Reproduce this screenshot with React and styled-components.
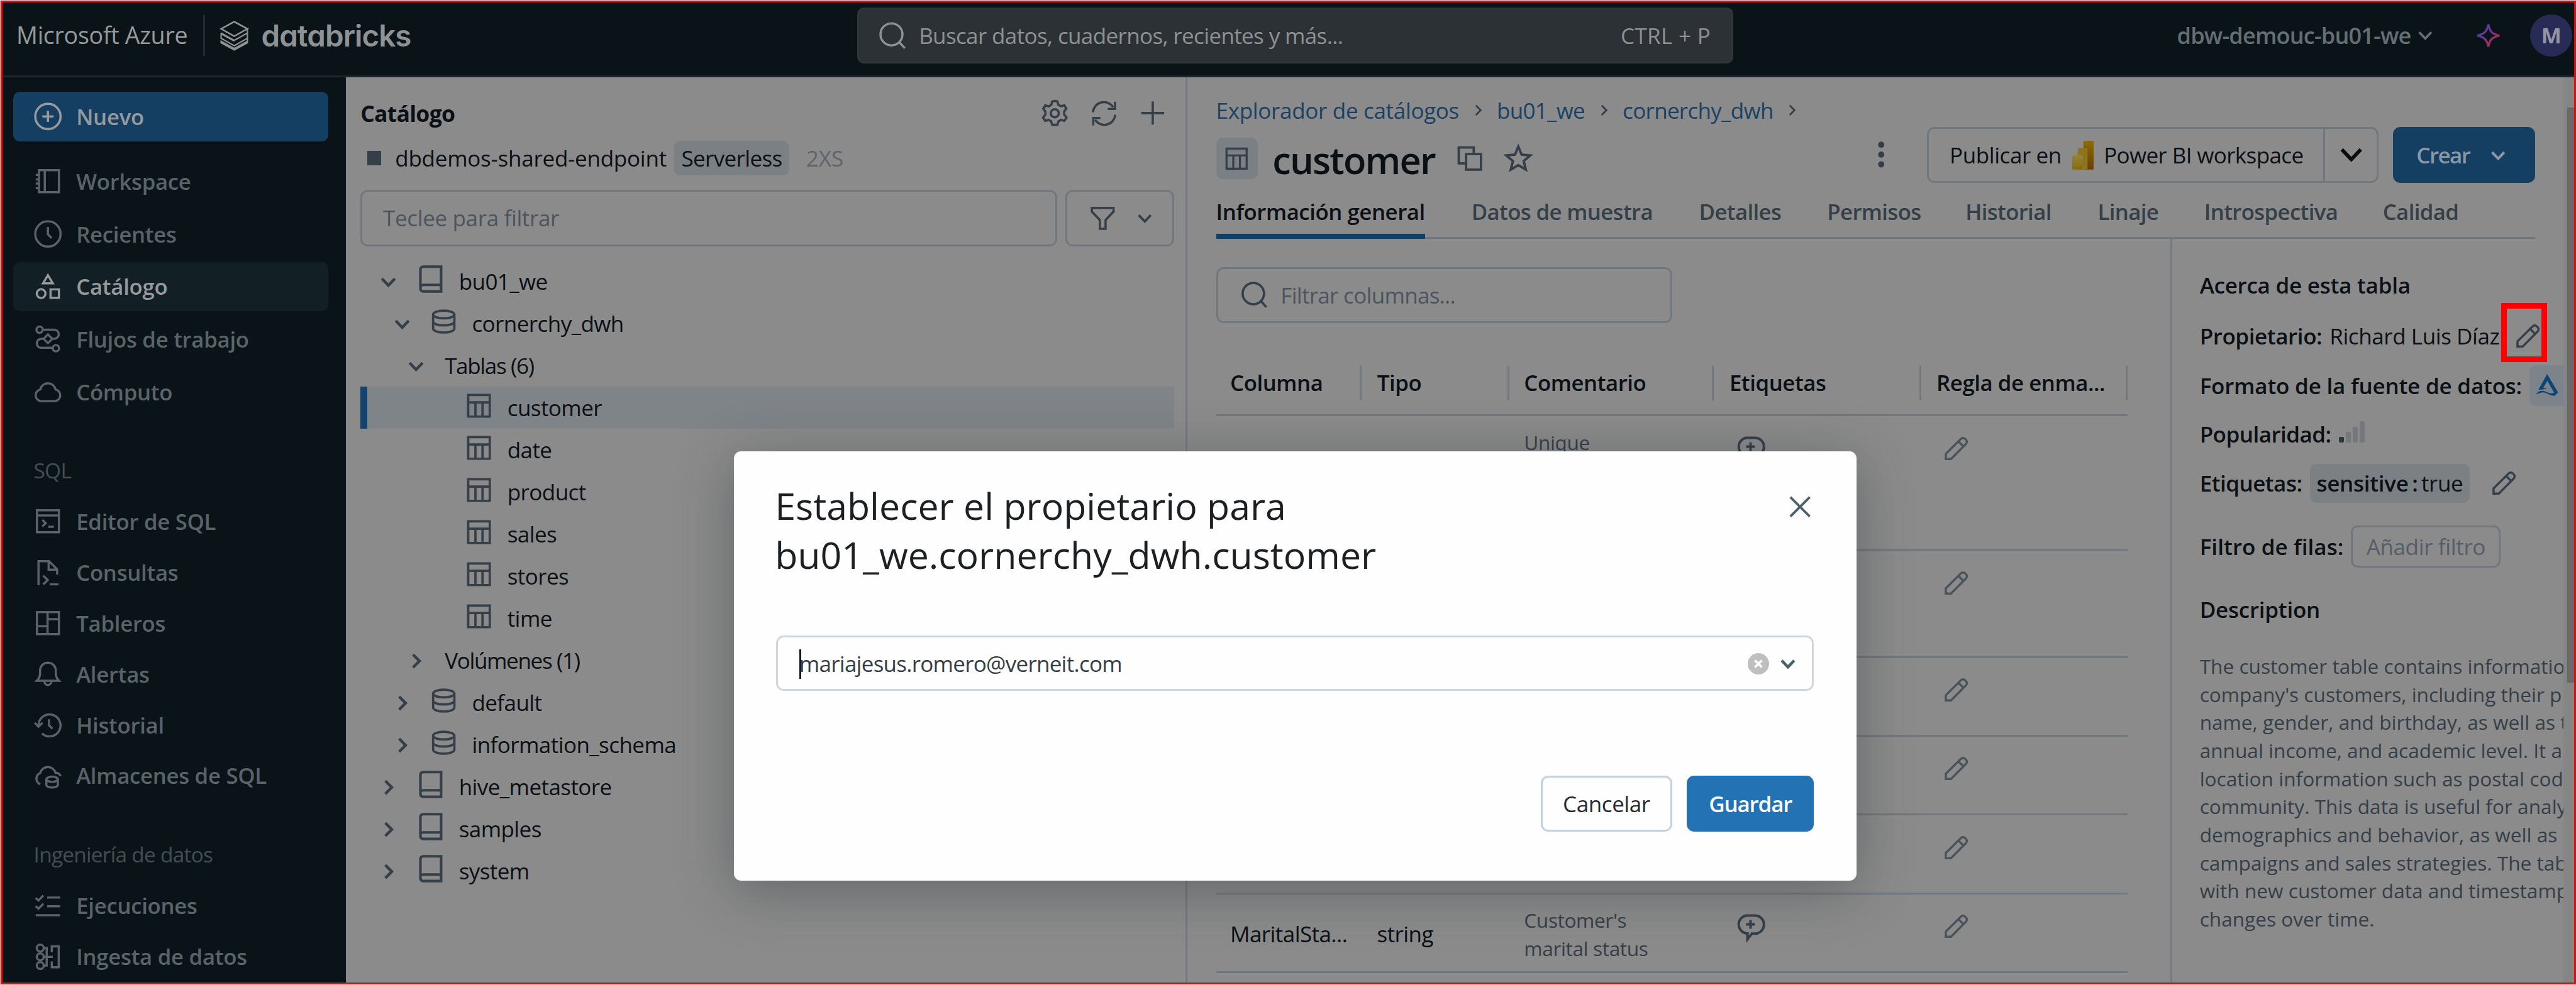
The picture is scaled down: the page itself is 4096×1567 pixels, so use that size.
import React from 'react';
import styled, { createGlobalStyle } from 'styled-components';

const K = 4096 / 1568;
const u = (...n) => n.map((v) => `${+(v * K).toFixed(2)}px`).join(' ');

const c = {
  nav: '#0a1418',
  navText: '#5a6468',
  navHi: '#969a9c',
  page: '#8b8b8b',
  line: '#70777d',
  text: '#0a1014',
  soft: '#343f47',
  icon: '#343f48',
  link: '#1a4265',
  blue: '#143f63',
  chip: '#7b8084',
  hint: '#4b555e',
};

const Global = createGlobalStyle`
  *, *::before, *::after { box-sizing: border-box; }
  body { margin: 0; background: #e9d3d3; font-family: "Open Sans", "Noto Sans", sans-serif; overflow: hidden; }
`;

/* ---------- shell ---------- */
const Screen = styled.div`
  position: relative;
  width: 4096px;
  height: 1567px;
  overflow: hidden;
  display: flex;
  flex-direction: column;
  background: ${c.page};
  color: ${c.text};
  font-size: ${u(13.4)};
  line-height: 1.3;
  white-space: nowrap;
`;
const Frame = styled.div`
  position: absolute;
  inset: 0;
  border: 1px solid #f0caca;
  border-right: 0;
  box-shadow: inset 0 0 0 3px #fd0202;
  pointer-events: none;
`;
const Ico = styled.svg`
  width: ${(p) => u(p.$s || 17)};
  height: ${(p) => u(p.$h || p.$s || 17)};
  flex: none;
  display: block;
  fill: none;
  stroke: ${(p) => p.$c || 'currentColor'};
  stroke-width: ${(p) => p.$w || 1.4};
  overflow: visible;
`;
const T = styled.span`
  letter-spacing: ${(p) => p.$ls || 0}em;
  font-weight: ${(p) => p.$b || 400};
  color: ${(p) => p.$c || 'inherit'};
`;
const Gap = styled.span`
  flex: none;
  width: ${(p) => u(p.$w)};
`;

/* ---------- top bar ---------- */
const Top = styled.header`
  flex: none;
  height: ${u(47.1)};
  background: ${c.nav};
  border-bottom: 3px solid #1b272a;
  display: grid;
  grid-template-columns: ${u(521.6)} ${u(533.6)} 1fr;
  padding-top: ${u(4.5)};
`;
const Brand = styled.div`
  display: flex;
  align-items: center;
  height: ${u(34.3)};
  padding-left: ${u(10)};
  color: ${c.navHi};
`;
const Azure = styled.span`
  font-size: ${u(14.4)};
  letter-spacing: ${(p) => p.$ls}em;
  width: ${u(113.5)};
`;
const Rule = styled.i`
  width: 3px;
  height: ${u(25)};
  background: #1f2b2e;
  margin-right: ${u(9.2)};
`;
const Word = styled.span`
  font-family: Inter, "Open Sans", sans-serif;
  font-feature-settings: "cv11", "ss01";
  font-weight: 600;
  font-size: ${u(18.2)};
  letter-spacing: -0.02em;
  margin-left: ${u(8)};
  color: #8e9294;
`;
const Search = styled.div`
  height: ${u(34.3)};
  background: #2c3135;
  border: 3px solid #30373a;
  border-radius: ${u(4)};
  display: flex;
  align-items: center;
  padding: ${u(0, 12.7, 0, 12.2)};
  gap: ${u(7.9)};
  color: #8d9193;
  & > :last-child { margin-left: auto; }
`;
const Account = styled.div`
  display: flex;
  align-items: center;
  justify-content: flex-end;
  height: ${u(34.3)};
  color: #656f73;
  padding-right: ${u(2.2)};
  font-size: ${u(13.8)};
`;
const Avatar = styled.div`
  width: ${u(25.7)};
  height: ${u(25.7)};
  border-radius: 50%;
  background: #282b55;
  color: #9394a4;
  font-weight: 700;
  font-size: ${u(13)};
  display: grid;
  place-items: center;
`;

/* ---------- side navigation ---------- */
const Body = styled.div`
  flex: 1;
  min-height: 0;
  display: flex;
`;
const Nav = styled.nav`
  flex: none;
  width: ${u(210.5)};
  background: ${c.nav};
  padding: ${u(8.7, 10.5, 0, 8)};
  overflow: hidden;
  display: flex;
  flex-direction: column;
`;
const NavItem = styled.div`
  flex: none;
  display: flex;
  align-items: center;
  gap: ${u(8.7)};
  padding-left: ${u(12.7)};
  height: ${(p) => u(p.$h || 32.15)};
  color: ${(p) => (p.$on ? c.navHi : c.navText)};
  background: ${(p) => p.$bg || 'transparent'};
  border-radius: ${u(4)};
  font-weight: 600;
  font-size: ${u(13.3)};
  letter-spacing: ${(p) => p.$ls || -0.008}em;
  margin: ${(p) => p.$m || 0};
`;
const NavLabel = styled.div`
  flex: none;
  padding-left: ${u(12.5)};
  height: ${u(31)};
  line-height: ${u(31)};
  font-size: ${u(12.8)};
  color: #444e52;
  letter-spacing: -0.022em;
  margin-top: ${(p) => u(p.$t)};
`;

/* ---------- catalog tree ---------- */
const Catalog = styled.section`
  flex: none;
  width: ${u(512.3)};
  border-right: 3px solid #747a7f;
  padding: ${u(10.4, 7, 0, 8.9)};
`;
const CatHead = styled.div`
  display: flex;
  align-items: center;
  height: ${u(23)};
  font-size: ${u(13.6)};
  color: ${c.text};
  padding-right: ${u(5)};
  gap: ${u(13.4)};
  & > :first-child { margin-right: auto; }
  & svg { color: ${c.icon}; }
`;
const Endpoint = styled.div`
  display: flex;
  align-items: center;
  height: ${u(21)};
  margin: ${u(5.3, 0, 9, 4)};
`;
const Stop = styled.i`
  width: ${u(8.7)};
  height: ${u(8.7)};
  background: ${c.icon};
  margin-right: ${u(8.4)};
`;
const Chip = styled.span`
  display: inline-flex;
  align-items: center;
  height: ${(p) => u(p.$h || 21)};
  padding: ${u(0, 4.2)};
  background: ${c.chip};
  border-radius: ${u(4)};
  margin: ${(p) => p.$m || 0};
`;
const Field = styled.div`
  display: flex;
  align-items: center;
  height: ${u(34.1)};
  width: ${(p) => u(p.$w)};
  border: 3px solid ${c.line};
  border-radius: ${u(4.5)};
  padding-left: ${(p) => u(p.$pl)};
  gap: ${(p) => u(p.$g || 0)};
  color: ${(p) => p.$c || c.hint};
`;
const FilterRow = styled.div`
  display: flex;
  gap: ${u(4.6)};
  margin-bottom: ${u(8.7)};
`;
const Node = styled.div`
  display: flex;
  align-items: center;
  height: ${u(25.65)};
  padding-left: ${(p) => u(p.$l)};
  background: ${(p) => (p.$on ? '#7f8489' : 'transparent')};
  border-left: ${u(4.3)} solid ${(p) => (p.$on ? '#14446d' : 'transparent')};
`;
const Twist = styled.span`
  width: ${u(17)};
  display: flex;
  justify-content: center;
  color: ${c.icon};
  margin-right: ${(p) => u(p.$r)};
  padding-top: ${u(1)};
`;
const TreeIcon = styled.span`
  display: flex;
  justify-content: center;
  width: ${u(17)};
  margin-right: ${u(8.6)};
  padding-bottom: ${u(2.6)};
  color: ${c.icon};
`;

/* ---------- details ---------- */
const Main = styled.main`
  flex: none;
  width: ${u(837.7)};
  overflow: hidden;
  padding: ${u(9.9, 0, 0, 17.4)};
  display: flex;
  flex-direction: column;
`;
const Crumbs = styled.div`
  display: flex;
  align-items: center;
  height: ${u(20.2)};
  color: ${c.link};
  font-size: ${u(13.4)};
  gap: ${u(6)};
  flex: none;
`;
const TitleRow = styled.div`
  flex: none;
  display: flex;
  align-items: center;
  height: ${u(34.1)};
  margin-right: ${u(17.3)};
`;
const TitleGroup = styled.div`
  display: flex;
  align-items: center;
  padding-top: ${u(4.5)};
  margin-right: auto;
  color: ${c.icon};
`;
const TypeBadge = styled.span`
  width: ${u(25.3)};
  height: ${u(25.4)};
  display: grid;
  place-items: center;
  background: ${c.chip};
  border-radius: ${u(4)};
  margin-right: ${u(9)};
`;
const Title = styled.h1`
  margin: ${u(1.4, 13.6, 0, 0)};
  font-size: ${u(22.8)};
  line-height: 1.2;
  font-weight: 600;
  letter-spacing: ${(p) => p.$ls}em;
  color: ${c.text};
`;
const Split = styled.div`
  display: flex;
  width: ${u(274.9)};
  height: ${u(34.1)};
  border: 3px solid ${c.line};
  border-radius: ${u(4.5)};
  margin: ${u(0, 8.8, 0, 26)};
`;
const SplitMain = styled.div`
  flex: 1;
  display: flex;
  align-items: center;
  padding: ${u(0.8, 0, 0, 12.6)};
  gap: ${u(6.4)};
`;
const SplitMore = styled.div`
  width: ${u(32.5)};
  border-left: 3px solid ${c.line};
  display: grid;
  place-items: center;
`;
const Create = styled.div`
  width: ${u(86.5)};
  height: ${u(34.1)};
  border-radius: ${u(4.5)};
  background: ${c.blue};
  color: #8b98a4;
  display: flex;
  align-items: center;
  padding: ${u(0.8, 0, 0, 14.2)};
  gap: ${u(10.4)};
`;
const Tabs = styled.div`
  flex: none;
  display: flex;
  gap: ${u(28.4)};
  height: ${u(34.2)};
  margin-right: ${u(17.3)};
  box-shadow: inset 0 -3px 0 ${c.line};
`;
const Tab = styled.div`
  width: ${(p) => u(p.$w)};
  height: 100%;
  display: flex;
  align-items: center;
  padding-top: ${u(3.8)};
  border-bottom: ${u(3.3)} solid ${(p) => (p.$on ? '#0f3f66' : 'transparent')};
  color: ${(p) => (p.$on ? c.text : c.soft)};
  font-weight: 600;
  font-size: ${u(13.3)};
  letter-spacing: ${(p) => (p.$on ? -0.012 : -0.018)}em;
`;
const Panes = styled.div`
  flex: 1;
  display: flex;
  min-height: 0;
`;
const Columns = styled.div`
  flex: none;
  width: ${u(580.8)};
  padding-top: ${u(17.1)};
`;
const grid = `grid-template-columns: ${u(88.7, 89.7, 124.7, 126.3, 125.5)};`;
const HeadRow = styled.div`
  display: grid;
  ${grid}
  width: ${u(554.9)};
  align-items: center;
  height: ${u(39.2)};
  margin-top: ${u(17.6)};
  border-bottom: 3px solid ${c.line};
`;
const HeadCell = styled.div`
  height: ${u(21)};
  line-height: ${u(21)};
  padding-left: ${(p) => u(p.$l || 9.4)};
  border-right: 3px solid ${c.line};
  font-weight: 600;
  font-size: ${u(13.3)};
  letter-spacing: -0.012em;
`;
const Row = styled.div`
  display: grid;
  ${grid}
  width: ${u(554.9)};
  height: ${(p) => u(p.$h)};
  border-bottom: 3px solid ${c.line};
`;
const Cell = styled.div`
  padding: ${(p) => u(p.$t || 0, 0, 0, p.$l || 9.3)};
  align-self: ${(p) => (p.$mid ? 'center' : 'start')};
  color: ${(p) => p.$c || c.text};
`;
const Note = styled.div`
  padding: ${u(7.6, 0, 0, 9.1)};
  font-size: ${u(12.1)};
  line-height: ${u(17.1)};
  letter-spacing: -0.012em;
  color: ${c.soft};
`;
const About = styled.aside`
  flex: 1;
  min-width: 0;
  border-left: 3px solid #747a80;
  padding: ${u(13.3, 0, 0, 16.8)};
`;
const Fact = styled.div`
  position: relative;
  display: flex;
  align-items: center;
  height: ${(p) => u(p.$h || 30)};
  gap: ${u(4.6)};
  & svg { color: ${c.icon}; }
`;
const Label = styled.span`
  font-weight: 550;
  letter-spacing: ${(p) => p.$ls || -0.007}em;
`;
const Mark = styled.div`
  position: absolute;
  left: ${u(183.6)};
  top: ${u(-4.2)};
  width: ${u(27.7)};
  height: ${u(35.8)};
  border: ${u(3.6)} solid #fe0000;
`;
const DeltaChip = styled.span`
  flex: none;
  width: ${u(40)};
  height: ${u(25)};
  background: #7c838b;
  border-radius: ${u(4)};
  padding: ${u(5.5, 0, 0, 4)};
  margin-left: auto;
`;
const Bars = styled.span`
  display: flex;
  align-items: flex-end;
  gap: ${u(0.9)};
  padding-bottom: ${u(2.6)};
`;
const Bar = styled.i`
  width: ${u(3.3)};
  height: ${(p) => u(p.$h)};
  border-radius: ${u(0.8)};
  background: ${(p) => (p.$on ? '#2b383e' : '#74777b')};
`;
const AddFilter = styled.span`
  display: grid;
  place-items: center;
  width: ${u(91)};
  height: ${u(25.4)};
  border: 3px solid #70767b;
  border-radius: ${u(4)};
  color: #555e66;
  letter-spacing: -0.01em;
`;
const Para = styled.p`
  margin: ${u(11, 0, 0, 0)};
  font-size: ${u(12.1)};
  line-height: ${u(17.1)};
  color: ${c.soft};
`;
const Scroll = styled.div`
  flex: 1;
  background: #858585;
  padding: ${u(18.3, 1, 0, 2)};
`;
const Thumb = styled.div`
  height: ${u(350.3)};
  background: #696969;
`;

/* ---------- dialog ---------- */
const Dialog = styled.div`
  position: absolute;
  left: ${u(446.6)};
  top: ${u(274.9)};
  width: ${u(683.3)};
  height: ${u(261.4)};
  background: #fefefe;
  border-radius: ${u(4.3)};
  box-shadow: 0 ${u(6)} ${u(34)} rgba(40, 48, 52, 0.4);
  padding: ${u(18.4, 25.7, 0, 25.9)};
`;
const DialogHead = styled.div`
  display: flex;
  justify-content: space-between;
  height: ${u(93.8)};
`;
const DialogTitle = styled.h2`
  margin: 0 0 0 ${u(-0.8)};
  font-size: ${u(22.6)};
  line-height: ${u(29.8)};
  font-weight: 500;
  color: #1c2023;
  letter-spacing: ${(p) => p.$ls}em;
`;
const CloseBox = styled.div`
  padding: ${u(9.3, 2.2, 0, 0)};
  color: #4a606e;
`;
const Select = styled.div`
  display: flex;
  align-items: center;
  height: ${u(33.8)};
  border: 3px solid #cdd7e1;
  border-radius: ${u(4.5)};
  padding: ${u(0.6, 7.4, 0, 12.8)};
  color: #363f46;
`;
const Caret = styled.i`
  width: 3px;
  height: ${u(18)};
  background: #10181c;
  margin-right: ${u(-1.1)};
`;
const Clear = styled.svg`
  width: ${u(13)};
  height: ${u(13)};
  margin: ${u(0, 4.2, 0, 0)};
  margin-left: auto;
`;
const Actions = styled.div`
  display: flex;
  justify-content: flex-end;
  gap: ${u(9)};
  margin-top: ${u(51.4)};
`;
const Button = styled.div`
  display: grid;
  place-items: center;
  width: ${(p) => u(p.$w)};
  height: ${u(34.1)};
  border-radius: ${u(4.5)};
  border: 3px solid ${(p) => (p.$primary ? '#2272b4' : '#c3d1de')};
  background: ${(p) => (p.$primary ? '#2272b4' : '#fefefe')};
  color: ${(p) => (p.$primary ? '#fbfdff' : '#252b30')};
  font-weight: ${(p) => (p.$primary ? 600 : 400)};
  letter-spacing: ${(p) => (p.$primary ? -0.034 : -0.012)}em;
`;

/* ---------- icons ---------- */
const glyph = {
  plusCircle: <><circle cx="8" cy="8" r="7.25" /><path d="M8 4.8v6.4M4.8 8h6.4" /></>,
  notebook: <path d="M2.9 1.7h11.4v12.6H2.9zM6.2 1.7v12.6M1 4.4h2M1 7h2M1 9.4h2M1 12h2" />,
  clock: <><circle cx="8" cy="8" r="7.25" /><path d="M8 4v4.2l2.1 2.2" /></>,
  catalog: <><path d="M8 1.4 10.8 6H5.2z" /><circle cx="4.1" cy="11.9" r="2.5" /><path d="M9.5 9.5h4.8v4.8H9.5z" /></>,
  flow: <><circle cx="3.2" cy="2.7" r="1.8" /><path d="M5 2.7h6.6a2.6 2.6 0 0 1 0 5.2h-1M5.4 7.9H4.2a2.6 2.6 0 0 0 0 5.2h6.6M8 5.4l2.5 2.5L8 10.4 5.5 7.9z" /><circle cx="12.6" cy="13.3" r="1.8" /></>,
  cloud: <path d="M4 13.4a3.4 3.4 0 0 1-.4-6.7 4.5 4.5 0 0 1 8.8 0 3.4 3.4 0 0 1-.4 6.7z" />,
  editor: <path d="M1.7 1.7h12.6v12.6H1.7zM1.7 4.7h12.6M4.8 7.2l1.9 1.9-1.9 1.9M8.2 11.2h3.2" />,
  query: <path d="M2.6 15.5V1.7h6l4.7 4.7v3M8.4 2v4.6H13M5.3 10l2.6 2.5L5.3 15M9 15h5" />,
  board: <path d="M1.7 1.7h12.6v12.6H1.7zM7.8 1.7v12.6M1.7 9.8h6.1M7.8 5.8h6.5" />,
  bell: <path d="M1.6 11.9h12.8c-1.3-1.2-1.9-2.4-1.9-4.3V6a4.5 4.5 0 0 0-9 0v1.6c0 1.9-.6 3.1-1.9 4.3zM6 12.3a2 2 0 0 0 4 0" />,
  history: <path d="M2.6 8.4A6.3 6.3 0 1 1 4.6 12.9M.4 6.8l2.2 2.2 2.3-2.2M8.6 4.8v3.4l2 2" />,
  cloudDb: <><path d="M3.7 12.8A3.4 3.4 0 0 1 3.6 6.4a4.5 4.5 0 0 1 8.7-.2c1.4.1 2.6.9 3 2" /><ellipse cx="10.4" cy="10" rx="3.3" ry="1.5" /><path d="M7.1 10v3.2c0 .8 1.5 1.5 3.3 1.5s3.3-.7 3.3-1.5V10" /></>,
  checks: <path d="M1 3.4l1.6 1.5L5.4 2M1 8.1l1.6 1.5 2.8-2.9M7.6 3.2H15M7.6 8.2H15M1 13.3h14" />,
  ingest: <><circle cx="3.6" cy="3" r="2" /><circle cx="3.6" cy="8" r="2" /><circle cx="3.6" cy="13" r="2" /><path d="M5.6 3h1.7v10H5.6M5.6 8h5.2M10.2 5.4V2h4v12h-4v-3.4" /></>,
  search: <><circle cx="7.6" cy="7.3" r="6.5" /><path d="M12.3 12l3.2 3.5" /></>,
  gear: <><path d="M8 .9l1.5.3.5 1.9 1.5.9 1.9-.6 1.2 1.9-1.2 1.6v1.9l1.3 1.6-1.2 1.9-2-.5-1.4.9-.6 1.9H6.5l-.6-1.9-1.4-.9-2 .5-1.2-1.9 1.3-1.6V7L1.4 5.4l1.2-1.9 1.9.6L6 3.2l.5-2z" /><circle cx="8" cy="8" r="2.3" /></>,
  sync: <path d="M1.4 7.3A6.5 6.5 0 0 1 13.3 4.2M14.4 1v4.3h-4.2M14.6 8.7A6.5 6.5 0 0 1 2.7 11.8M1.6 15v-4.3h4.2" />,
  plus: <path d="M8 1v14M1 8h14" />,
  funnel: <path d="M1.2 1.5h13.6v2.2L9.8 9v5.5H6.2V9l-5-5.3z" />,
  down: <path d="M3.8 5.8 8 10.2l4.2-4.4" />,
  right: <path d="M6 3.8 10.2 8 6 12.2" />,
  book: <path d="M14 .8H3.6A1.6 1.6 0 0 0 2 2.4v11.2a1.6 1.6 0 0 0 1.6 1.6H14zM2 13.4A1.6 1.6 0 0 1 3.6 11.4H14" />,
  db: <><ellipse cx="8" cy="3.4" rx="6.9" ry="2.5" /><path d="M1.1 3.4v9.2c0 1.4 3.1 2.5 6.9 2.5s6.9-1.1 6.9-2.5V3.4M1.1 8c0 1.4 3.1 2.5 6.9 2.5s6.9-1.1 6.9-2.5" /></>,
  table: <path d="M1 1h14v14H1zM1 5.8h14M5.7 5.8V15M10.3 5.8V15" />,
  copy: <path d="M4.8 11H1V1h9.4v3.8M5.6 5.2h9.4V15H5.6z" />,
  star: <path d="M8 1.2l1.9 4.5 5 .5-3.8 3.2 1.2 4.9L8 11.8l-4.3 2.5 1.2-4.9L1.1 6.2l5-.5z" />,
  pencil: <path d="M1.2 14.8v-3.4L11 1.7a1.9 1.9 0 0 1 2.7 0l.6.6a1.9 1.9 0 0 1 0 2.7L4.6 14.8zM9.4 3.4l3.3 3.3" />,
  comment: <><path d="M5.4.9h5.2a4.8 4.8 0 0 1 0 10.8H8.8L6.2 15v-3.4A5.4 5.4 0 0 1 5.4.9z" /><path d="M8 3.6v5.2M5.4 6.2h5.2" /></>,
};
const I = ({ n, s, w, col, h }) => (
  <Ico viewBox="0 0 16 16" $s={s} $h={h} $w={w} $c={col}>{glyph[n]}</Ico>
);

const Logo = () => (
  <Ico viewBox="0 0 17.2 18.3" $s={17.2} $h={18.3} $w={1} $c="#8e9294">
    <path d="M.6 4.9 8.6.6l8 4.3-8 4.5z" />
    <path d="M16.6 4.9v2.6l-8 4.5-8-4.5V7.3M16.6 7.5v3.2l-8 4.5-8-4.5V8l8 4.4M16.6 10.7v2.7l-8 4.4-8-4.4v-.9l8 4.4 8-4.4" strokeWidth=".85" />
  </Ico>
);
const Sparkle = () => (
  <Ico viewBox="0 0 16 16" $s={15} $w={1.4} $c="url(#spark)">
    <defs>
      <linearGradient id="spark" x1="0" y1="0" x2="1" y2="1">
        <stop offset="0.15" stopColor="#3a4aa0" />
        <stop offset="0.5" stopColor="#7c2f8c" />
        <stop offset="0.85" stopColor="#a83240" />
      </linearGradient>
    </defs>
    <path d="M8 .8c.9 4.4 2.3 6.2 7.2 7.2-4.9 1-6.3 2.8-7.2 7.2C7.1 10.8 5.7 9 .8 8 5.7 7 7.1 5.2 8 .8z" />
  </Ico>
);
const PowerBI = () => (
  <Ico viewBox="0 0 13 17.5" $s={13} $h={17.5} $c="none">
    <defs>
      <linearGradient id="pa" x1="0" y1="0" x2="0" y2="1"><stop offset="0" stopColor="#8c6c00" /><stop offset="1" stopColor="#6b3f06" /></linearGradient>
      <linearGradient id="pb" x1="0" y1="0" x2="0" y2="1"><stop offset="0" stopColor="#95843a" /><stop offset="1" stopColor="#8a6a0a" /></linearGradient>
    </defs>
    <rect x="6.8" y="0" width="6.2" height="17.5" rx=".6" fill="url(#pa)" />
    <rect x="3.3" y="4.4" width="6" height="13.1" rx=".6" fill="#8d7420" />
    <rect x="0" y="8.7" width="6.3" height="8.8" rx=".6" fill="url(#pb)" />
  </Ico>
);
const Delta = () => (
  <Ico viewBox="0 0 14 13.5" $s={14} $h={13.5} $c="none">
    <path d="M6.9 0 13.6 11.2 11.5 13.3C8.5 13.5 6 10.6 3.6 11.3L0 12.3c2-2.4 4-2.5 6.5-1.4 2 .9 3.5 1 4.7.5L7 4.1 4.6 8.4l2.6.7-5.6.6z" fill="#0c4676" />
  </Ico>
);
const Kebab = () => (
  <Ico viewBox="0 0 4 16" $s={4} $h={16} $c="none">
    {[2, 8, 14].map((y) => <circle key={y} cx="2" cy={y} r="1.9" fill={c.icon} />)}
  </Ico>
);

/* ---------- data ---------- */
const nav1 = [['notebook', 'Workspace'], ['clock', 'Recientes'], ['catalog', 'Catálogo', true], ['flow', 'Flujos de trabajo'], ['cloud', 'Cómputo']];
const nav2 = [['editor', 'Editor de SQL'], ['query', 'Consultas'], ['board', 'Tableros'], ['bell', 'Alertas'], ['history', 'Historial'], ['cloudDb', 'Almacenes de SQL']];
const nav3 = [['checks', 'Ejecuciones'], ['ingest', 'Ingesta de datos']];
const tree = [
  [0, 'down', 'book', 'bu01_we'],
  [1, 'down', 'db', 'cornerchy_dwh'],
  [2, 'down', null, 'Tablas (6)'],
  [3, null, 'table', 'customer', true],
  [3, null, 'table', 'date'],
  [3, null, 'table', 'product'],
  [3, null, 'table', 'sales'],
  [3, null, 'table', 'stores'],
  [3, null, 'table', 'time'],
  [2, 'right', null, 'Volúmenes (1)'],
  [1, 'right', 'db', 'default'],
  [1, 'right', 'db', 'information_schema'],
  [0, 'right', 'book', 'hive_metastore'],
  [0, 'right', 'book', 'samples'],
  [0, 'right', 'book', 'system'],
];
const tabs = [['Información general', 127.1, true], ['Datos de muestra', 110.1], ['Detalles', 49.6], ['Permisos', 55.8], ['Historial', 52.1], ['Linaje', 36.4], ['Introspectiva', 80.3], ['Calidad', 47]];
const heads = [['Columna', 8.6], ['Tipo'], ['Comentario', 9.1], ['Etiquetas'], ['Regla de enma...', 9.1]];
const about = [
  'The customer table contains informatio',
  "company's customers, including their p",
  'name, gender, and birthday, as well as t',
  'annual income, and academic level. It a',
  'location information such as postal cod',
  'community. This data is useful for analy',
  'demographics and behavior, as well as',
  'campaigns and sales strategies. The tab',
  'with new customer data and timestamp',
  'changes over time.',
];

export default function App() {
  const item = ([n, t]) => (
    <NavItem key={t} $h={31}>
      <I n={n} w={1.25} /> {t}
    </NavItem>
  );
  return (
    <Screen>
      <Global />
      <Top>
        <Brand>
          <Azure $ls={-0.008}>Microsoft Azure</Azure>
          <Rule />
          <Logo />
          <Word>databricks</Word>
        </Brand>
        <Search>
          <I n="search" s={16.5} w={1.3} />
          <T $ls={-0.018}>Buscar datos, cuadernos, recientes y más...</T>
          <T $ls={0.01}>CTRL + P</T>
        </Search>
        <Account>
          <T $b={600} $ls={-0.022}>dbw-demouc-bu01-we</T>
          <Gap $w={1.6} />
          <I n="down" s={14} w={1.7} />
          <Gap $w={24} />
          <Sparkle />
          <Gap $w={18} />
          <Avatar>M</Avatar>
        </Account>
      </Top>
      <Body>
        <Nav>
          <NavItem $h={30.2} $on $bg={c.blue} $m={u(0, 0, 8.4, 0)}>
            <I n="plusCircle" w={1.3} /> Nuevo
          </NavItem>
          {nav1.map(([n, t, on]) => (
            <NavItem key={t} $h={30} $on={on} $bg={on ? '#121f24' : undefined} $m={u(1.02, 0, 1.02, 0)}>
              <I n={n} w={1.25} /> {t}
            </NavItem>
          ))}
          <NavLabel $t={16.4}>SQL</NavLabel>
          {nav2.map(item)}
          <NavLabel $t={17.2}>Ingeniería de datos</NavLabel>
          {nav3.map(item)}
        </Nav>
        <Catalog>
          <CatHead>
            <T $b={700} $ls={-0.02}>Catálogo</T>
            <I n="gear" s={17} w={1.3} />
            <I n="sync" s={16.5} w={1.3} />
            <I n="plus" s={16} w={1.4} />
          </CatHead>
          <Endpoint>
            <Stop />
            <T $ls={-0.007}>dbdemos-shared-endpoint</T>
            <Chip $m={u(0, 10.4, 0, 4.8)}><T $ls={-0.018}>Serverless</T></Chip>
            <T $c="#5d656b">2XS</T>
          </Endpoint>
          <FilterRow>
            <Field $w={424.6} $pl={12.6}><T $ls={-0.01}>Teclee para filtrar</T></Field>
            <Field $w={66.4} $pl={13.9} $g={11} $c={c.icon}>
              <I n="funnel" s={15.6} />
              <I n="down" s={14} w={1.7} />
            </Field>
          </FilterRow>
          {tree.map(([lvl, tw, ic, label, on]) => (
            <Node key={label} $on={on} $l={lvl === 3 ? 59.6 : 4.2 + lvl * 8.55}>
              {tw && <Twist $r={lvl === 2 ? 8.8 : lvl === 1 ? 8.3 : 8.9}><I n={tw} s={15} w={1.8} /></Twist>}
              {ic && <TreeIcon><I n={ic} s={ic === 'book' ? 16.8 : 15} w={1.5} /></TreeIcon>}
              <T $ls={lvl === 2 ? -0.038 : -0.016}>{label}</T>
            </Node>
          ))}
        </Catalog>
        <Main>
          <Crumbs>
            <T $ls={-0.009}>Explorador de catálogos</T>
            <I n="right" s={11} w={1.6} col={c.icon} />
            <T $ls={-0.02}>bu01_we</T>
            <I n="right" s={11} w={1.6} col={c.icon} />
            <T $ls={-0.02}>cornerchy_dwh</T>
            <I n="right" s={11} w={1.6} col={c.icon} />
          </Crumbs>
          <TitleRow>
            <TitleGroup>
              <TypeBadge><I n="table" s={14} w={1.4} /></TypeBadge>
              <Title $ls={-0.03}>customer</Title>
              <I n="copy" s={15.5} w={1.5} />
              <Gap $w={13.2} />
              <I n="star" s={17} w={1.4} />
            </TitleGroup>
            <Kebab />
            <Split>
              <SplitMain>
                <T $ls={-0.012}>Publicar en</T>
                <PowerBI />
                <T $ls={-0.018}>Power BI workspace</T>
              </SplitMain>
              <SplitMore><I n="down" s={22} w={1.6} col="#070c10" /></SplitMore>
            </Split>
            <Create><T $b={600} $ls={-0.045}>Crear</T><I n="down" s={14} w={1.8} /></Create>
          </TitleRow>
          <Tabs>
            {tabs.map(([t, w, on]) => <Tab key={t} $w={w} $on={on}>{t}</Tab>)}
          </Tabs>
          <Panes>
            <Columns>
              <Field $w={277.6} $pl={13.8} $g={8.4} $c={c.hint}>
                <I n="search" s={16} w={1.4} col={c.icon} />
                <T $ls={-0.02}>Filtrar columnas...</T>
              </Field>
              <HeadRow>
                {heads.map(([h, l]) => <HeadCell key={h} $l={l}>{h}</HeadCell>)}
              </HeadRow>
              {[82, 65.2, 47.9, 48.1, 47.9, 48.2].map((h, i) => (
                <Row key={i} $h={h}>
                  <Cell $mid $t={1.4} $l={8.6}>{i === 5 && <T $ls={-0.016}>MaritalSta...</T>}</Cell>
                  <Cell $mid $t={1.4}>{i === 5 && <T $ls={-0.016}>string</T>}</Cell>
                  <Note>
                    {i === 0 && 'Unique'}
                    {i === 5 && <>Customer's<br />marital status</>}
                  </Note>
                  <Cell $t={12.2} $l={14.2} $c={c.icon}>{(i === 0 || i === 5) && <I n="comment" s={16.4} w={1.5} />}</Cell>
                  <Cell $t={12} $l={13.8} $c="#48535a"><I n="pencil" s={15} w={1.4} /></Cell>
                </Row>
              ))}
            </Columns>
            <About>
              <Fact><Label>Acerca de esta tabla</Label></Fact>
              <Fact $h={31.6}>
                <Label $ls={-0.012}>Propietario:</Label>
                <T $ls={-0.012}>Richard Luis Díaz</T>
                <Gap $w={0.4} />
                <I n="pencil" s={15} w={1.4} />
                <Mark />
              </Fact>
              <Fact $h={29}>
                <Label $ls={-0.006}>Formato de la fuente de datos:</Label>
                <DeltaChip><Delta /></DeltaChip>
                <Gap $w={-0.1} />
              </Fact>
              <Fact>
                <Label $ls={-0.015}>Popularidad:</Label>
                <Bars><Bar $h={3.4} $on /><Bar $h={6.5} /><Bar $h={9.8} /><Bar $h={13} /></Bars>
              </Fact>
              <Fact>
                <Label $ls={-0.015}>Etiquetas:</Label>
                <Chip $h={23.5}><T $b={550} $ls={-0.008}>sensitive&thinsp;:&thinsp;</T><T $b={500} $ls={-0.012}>true</T></Chip>
                <Gap $w={4.2} />
                <I n="pencil" s={15} w={1.4} />
              </Fact>
              <Fact $h={47}>
                <Label $ls={0.002}>Filtro de filas:</Label>
                <AddFilter>Añadir filtro</AddFilter>
              </Fact>
              <Fact><Label>Description</Label></Fact>
              <Para>
                {about.map((l) => <React.Fragment key={l}>{l}<br /></React.Fragment>)}
              </Para>
            </About>
          </Panes>
        </Main>
        <Scroll><Thumb /></Scroll>
      </Body>
      <Dialog>
        <DialogHead>
          <DialogTitle $ls={0}>Establecer el propietario para<br />bu01_we.cornerchy_dwh.customer</DialogTitle>
          <CloseBox><Ico viewBox="0 0 12 12" $s={12.4} $w={1.4}><path d="M.3.3l11.4 11.4M11.7.3.3 11.7" /></Ico></CloseBox>
        </DialogHead>
        <Select>
          <Caret />
          <T $ls={-0.021}>mariajesus.romero@verneit.com</T>
          <Clear viewBox="0 0 13 13">
            <circle cx="6.5" cy="6.5" r="6.5" fill="#bfbfbf" />
            <path d="M4.4 4.4l4.2 4.2M8.6 4.4 4.4 8.6" stroke="#fff" strokeWidth="1.4" />
          </Clear>
          <I n="down" s={14.5} w={1.9} col="#4a606e" />
        </Select>
        <Actions>
          <Button $w={79.7}>Cancelar</Button>
          <Button $w={77.5} $primary>Guardar</Button>
        </Actions>
      </Dialog>
      <Frame />
    </Screen>
  );
}
